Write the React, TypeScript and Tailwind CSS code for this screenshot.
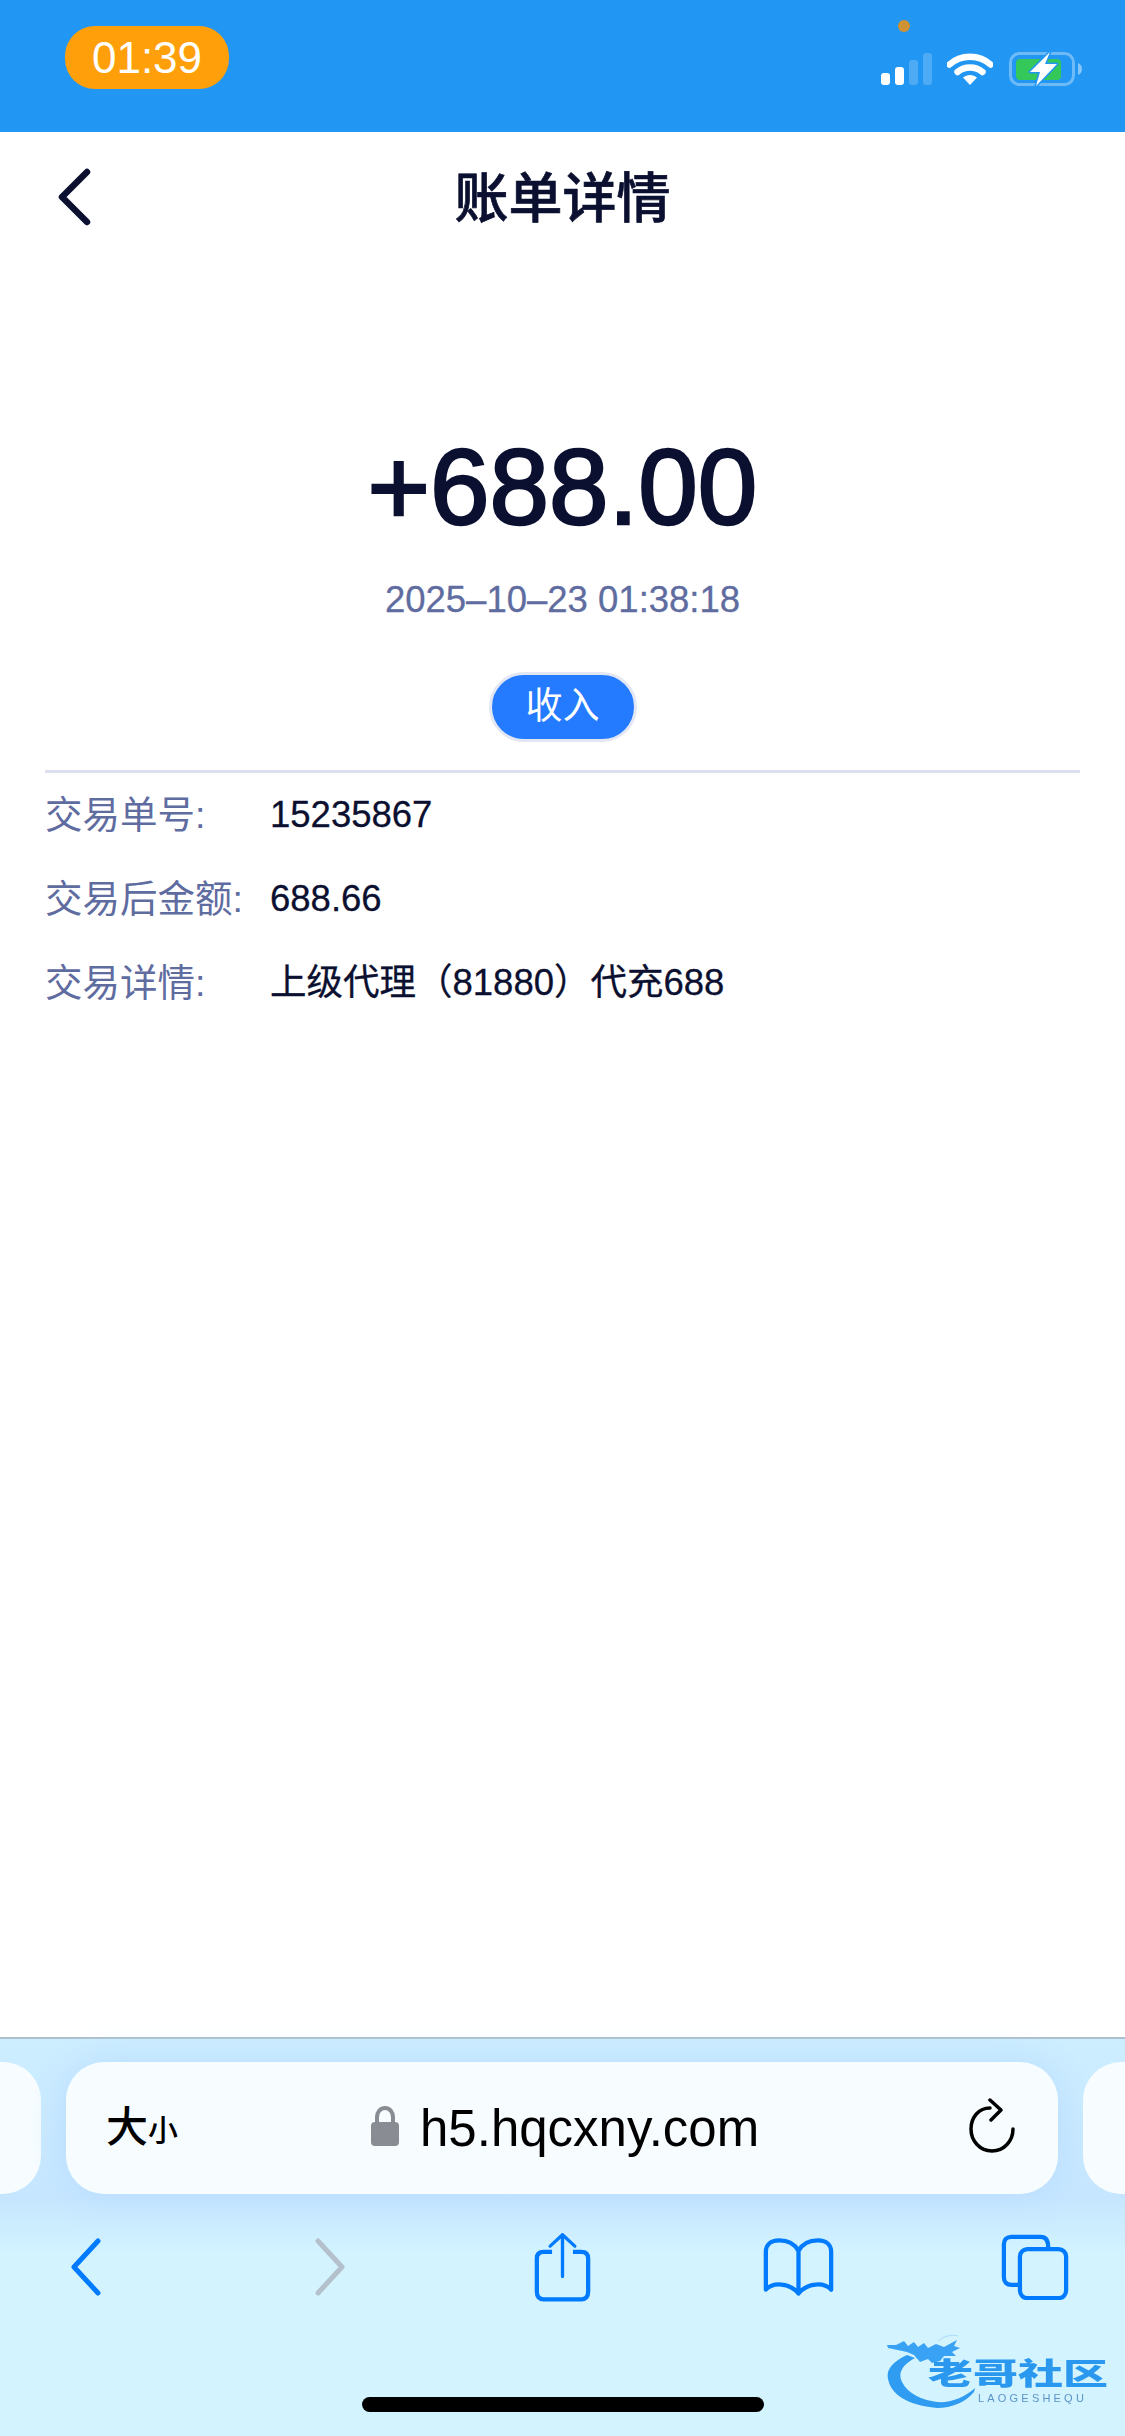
const cjk = "font-['Liberation_Sans','Noto_Sans_CJK_SC',sans-serif]";

const rows = [
  { label: "交易单号:", value: "15235867" },
  { label: "交易后金额:", value: "688.66" },
  { label: "交易详情:", value: "上级代理\uFF0881880\uFF09代充688" },
];

function StatusIcons() {
  return (
    <div className="flex items-end">
      {/* signal bars, two of them lit */}
      <svg width="51" height="32" viewBox="0 0 51 32" className="mb-[47px]">
        <rect x="0" y="20" width="9" height="12" rx="3" fill="#fff" />
        <rect x="14" y="14" width="9" height="18" rx="3" fill="#fff" />
        <rect x="28" y="7" width="9" height="25" rx="3" fill="#fff" fillOpacity=".2" />
        <rect x="42" y="0" width="9" height="32" rx="3" fill="#fff" fillOpacity=".2" />
      </svg>
      <svg width="46" height="33" viewBox="0 0 46 33" className="mb-[47px] ml-[15px]">
        <path d="M2.500 12.500C13.500 2 32.500 2 43.500 12.500" fill="none" stroke="#fff" strokeWidth="6.500" strokeLinecap="round" />
        <path d="M10.500 20C17.500 14 28.500 14 35.500 20" fill="none" stroke="#fff" strokeWidth="6.500" strokeLinecap="round" />
        <path d="M16 25.500C20 22 26 22 30 25.500L23 33Z" fill="#fff" />
      </svg>
      <svg width="74" height="36" viewBox="0 0 74 36" className="mb-[45px] ml-[16px]">
        <rect x="1.500" y="2.500" width="63" height="31" rx="9" fill="none" stroke="#fff" strokeOpacity=".35" strokeWidth="3" />
        <rect x="7" y="8" width="45" height="21" rx="4" fill="#34c759" />
        <path d="M69 12C72 13 73 15.500 73 18S72 23 69 24Z" fill="#fff" fillOpacity=".45" />
        <path d="M41 1L21 21H31L27 35L48 13H36Z" fill="#fff" stroke="#2196f3" strokeWidth="3" strokeLinejoin="round" paintOrder="stroke" />
      </svg>
    </div>
  );
}

function Watermark() {
  return (
    <div className="absolute top-[2332px] left-[884px] h-[80px] w-[230px] blur-[0.7px]">
      <svg width="100" height="80" viewBox="0 0 100 80" className="absolute top-0 left-0">
        {/* dragon tail curling under the wordmark */}
        <path d="M23 23C8 30 2 38 4 47C7 62 22 73 53 76C68 76 82 70 90 60L91 56C80 66 66 71 53 70C38 68 24 62 18 50C13 40 20 32 31 26Z" fill="#2f9cf2" />
        <path d="M3 13L12 13L20 9L24 14L30 10L34 15L40 11L44 16L52 12L60 15L73 8L70 14L76 16L68 20L72 24L60 24L56 29L48 31L44 27L36 30L30 23L23 20L4 16Z" fill="#3aa2f4" />
        <path d="M54 9C60 4 68 2 74 4" fill="none" stroke="#a9d8f7" strokeWidth="1" />
      </svg>
      <div className={`absolute top-[27px] left-[44px] origin-top scale-y-[0.66] text-[45px] leading-[45px] font-black whitespace-nowrap text-[#2a98ee] ${cjk}`}>
        老哥社区
      </div>
      <div className="absolute top-[61px] left-[94px] font-['Liberation_Sans',sans-serif] text-[11px] leading-[11px] tracking-[3.200px] text-[#5b93c9]">
        LAOGESHEQU
      </div>
    </div>
  );
}

export default function App() {
  return (
    <div className={`relative flex h-[2436px] w-[1125px] flex-col overflow-hidden bg-white ${cjk}`}>
      {/* status bar */}
      <div className="flex h-[132px] shrink-0 justify-between bg-[#2196f3] pr-[42px] pl-[65px]">
        <div className="mt-[26px] flex h-[63px] w-[164px] items-center justify-center rounded-[30px] bg-[#ff9f0a] text-[44px] text-white">
          01:39
        </div>
        <div className="relative flex items-end">
          <span className="absolute top-[20px] left-[17px] h-[12px] w-[12px] rounded-full bg-[#cf9233]" />
          <StatusIcons />
        </div>
      </div>

      {/* header */}
      <div className="relative flex h-[134px] shrink-0 items-center justify-center">
        <svg width="36" height="58" viewBox="0 0 36 58" className="absolute top-[36px] left-[56px]">
          <path d="M31 4L6 29L31 54" fill="none" stroke="#0b1030" strokeWidth="6.500" strokeLinecap="round" strokeLinejoin="round" />
        </svg>
        <h1 className="text-[54px] leading-none font-medium text-[#0b1030] [-webkit-text-stroke:0.7px_#0b1030]">账单详情</h1>
      </div>

      <main className="flex flex-1 flex-col items-center">
        <div className="mt-[155px] text-[107px] leading-[133px] text-[#0b1030] [-webkit-text-stroke:2.500px_#0b1030]">+688.00</div>
        <div className="mt-[24px] text-[36.500px] leading-[44px] text-[#5f6c9f] [-webkit-text-stroke:0.3px_#5f6c9f]">2025–10–23 01:38:18</div>
        <div className="mt-[50px] flex h-[70px] w-[148px] items-center justify-center rounded-full border-[3px] border-[#e3e7f3] bg-[#247bff] text-[37px] text-white">
          收入
        </div>
        <div className="mt-[28px] w-[1035px] border-t-[3px] border-[#dcdff0] pt-[17px]">
          {rows.map((row) => (
            <div key={row.label} className="flex h-[84px] items-start leading-[50px]">
              <span className="w-[225px] text-[37.500px] text-[#5f6c9f]">{row.label}</span>
              <span className="text-[36.500px] text-[#0b1030] [-webkit-text-stroke:0.3px_#0b1030]">{row.value}</span>
            </div>
          ))}
        </div>
      </main>

      {/* browser chrome */}
      <div className="h-[399px] shrink-0 border-t-2 border-[#aebfcc] bg-gradient-to-b from-[#cdeeff] via-[#c6e6ff] via-40% to-[#d3f4ff] to-55%">
        <div className="mt-[23px] flex gap-[25px]">
          <div className="-ml-[101px] h-[132px] w-[142px] shrink-0 rounded-[38px] bg-[#f7fcff]" />
          <div className="flex h-[132px] w-[992px] shrink-0 items-center rounded-[38px] bg-[#f7fcff] pr-[43px] pl-[40px] shadow-[0_0_36px_#b9dcff]">
            <div className="flex w-[265px] items-end text-black">
              <span className="text-[42px] leading-[50px] font-medium">大</span>
              <span className="text-[30px] leading-[44px] font-medium">小</span>
            </div>
            <svg width="28" height="40" viewBox="0 0 28 40" className="mb-[4px]">
              <path d="M6 17V11C6 6 9.500 2 14 2S22 6 22 11V17" fill="none" stroke="#8a8c94" strokeWidth="4" />
              <rect x="0" y="16" width="28" height="24" rx="4" fill="#8a8c94" />
            </svg>
            <span className="ml-[21px] flex-1 text-[51px] leading-none text-black">h5.hqcxny.com</span>
            <svg width="46" height="56" viewBox="0 0 46 56" className="mb-[4px]">
              <path d="M21 10C10 10 2 19 2 31S11 53 23 53S44 43 44 31" fill="none" stroke="#000" strokeWidth="3.500" strokeLinecap="round" />
              <path d="M21 2L32 12L22 22" fill="none" stroke="#000" strokeWidth="3.500" strokeLinecap="round" strokeLinejoin="round" />
            </svg>
          </div>
          <div className="h-[132px] w-[142px] shrink-0 rounded-[38px] bg-[#f7fcff]" />
        </div>

        {/* toolbar buttons */}
        <div className="mt-[37px] flex items-center pl-[70px]">
          <svg width="32" height="58" viewBox="0 0 32 58">
            <path d="M28 3L4 29L28 55" fill="none" stroke="#007aff" strokeWidth="5" strokeLinecap="round" strokeLinejoin="round" />
          </svg>
          <svg width="32" height="58" viewBox="0 0 32 58" className="ml-[212px]">
            <path d="M4 3L28 29L4 55" fill="none" stroke="#b4c0cc" strokeWidth="5" strokeLinecap="round" strokeLinejoin="round" />
          </svg>
          <svg width="57" height="72" viewBox="0 0 60 74" className="ml-[188px]">
            <path d="M19 21H10C5.500 21 3 23.500 3 28V63C3 68 5.500 71 10 71H50C54.500 71 57 68 57 63V28C57 23.500 54.500 21 50 21H41" fill="none" stroke="#007aff" strokeWidth="4.500" />
            <path d="M30 47V3M17 15L30 3L43 15" fill="none" stroke="#007aff" strokeWidth="3.500" strokeLinecap="round" strokeLinejoin="round" />
          </svg>
          <svg width="71" height="58" viewBox="0 0 75 60" className="ml-[172px]">
            <path d="M37.500 13C33 5 26 2 17 2C8 2 3 7 3 14V54C10 46 28 46 37.500 58C47 46 65 46 72 54V14C72 7 67 2 58 2C49 2 42 5 37.500 13ZM37.500 13V58" fill="none" stroke="#007aff" strokeWidth="4.500" strokeLinejoin="round" />
          </svg>
          <svg width="68" height="66" viewBox="0 0 72 70" className="ml-[167px]">
            <path d="M18 54H11C6 54 3 51 3 46V11C3 6 6 3 11 3H42C47 3 50 6 50 14" fill="none" stroke="#007aff" strokeWidth="4.500" />
            <rect x="20" y="16" width="49" height="52" rx="8" fill="none" stroke="#007aff" strokeWidth="4.500" />
          </svg>
        </div>
      </div>

      <Watermark />
      <div className="absolute top-[2397px] left-[362px] h-[15px] w-[402px] rounded-full bg-black" />
    </div>
  );
}
